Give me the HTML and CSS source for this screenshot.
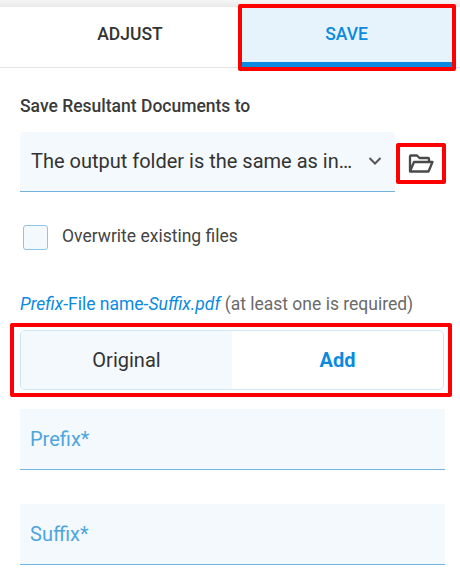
FILE: index.html
```html
<!DOCTYPE html>
<html lang="en">
<head>
    <meta charset="UTF-8">
    <title>Save</title>
    <link rel="stylesheet" href="styles.css">
</head>
<body>
    <div class="topbar"></div>
    <div class="tabs">
        <div class="tab">ADJUST</div>
        <div class="tab active">SAVE<span class="mark mark-tab"></span></div>
    </div>
    <div class="content">
        <div class="label">Save Resultant Documents to</div>
        <div class="folder-row">
            <div class="select">
                <span class="select-text">The output folder is the same as in…</span>
                <svg class="chevron" width="16" height="10" viewBox="0 0 16 10">
                    <path d="M2.500 2 L8 7.500 L13.500 2" fill="none" stroke="#555" stroke-width="2"/>
                </svg>
            </div>
            <div class="folder-btn">
                <svg width="26" height="20" viewBox="0 0 26 20">
                    <path d="M2 17.500 V2.500 Q2 1.500 3 1.500 H9 L11.500 4 H20 Q21 4 21 5 V7.500 M2 17.500 L6 8 H24.500 L20.500 17.500 Z" fill="none" stroke="#4a4a4a" stroke-width="2.300" stroke-linejoin="round"/>
                </svg>
                <span class="mark mark-folder"></span>
            </div>
        </div>
        <div class="check-row">
            <span class="checkbox"></span>
            <span class="check-label">Overwrite existing files</span>
        </div>
        <div class="hint">
            <span class="blue"><i>Prefix</i>-File name-<i>Suffix.pdf</i></span> (at least one is required)
        </div>
        <div class="segment">
            <div class="seg seg-off">Original</div>
            <div class="seg seg-on">Add</div>
            <span class="mark mark-segment"></span>
        </div>
        <div class="field">Prefix*</div>
        <div class="field field-last">Suffix*</div>
    </div>
</body>
</html>
```

FILE: styles.css
```css
* {
    box-sizing: border-box;
}

body {
    margin: 0;
    font-family: Roboto, sans-serif;
    background-color: #fff;
    color: #333;
    overflow: hidden;
}

.topbar {
    height: 7px;
    background: linear-gradient(#f6f6f6, #e9e9e9);
}

.tabs {
    display: flex;
    height: 61px;
    border-bottom: 1px solid #e4e4e4;
}

.tab {
    position: relative;
    width: 218px;
    margin-left: 21px;
    display: flex;
    align-items: center;
    justify-content: center;
    padding-bottom: 6px;
    font-size: 17.500px;
    font-weight: 500;
}

.tab.active {
    width: 211px;
    margin-left: 2px;
    color: #0a8ae0;
    background-color: #e6f3fd;
    border-bottom: 5px solid #0a8ae0;
    padding-bottom: 1px;
}

/* red annotation frames */
.mark {
    position: absolute;
    border: 4px solid #f00;
    border-radius: 2px;
    pointer-events: none;
}

.mark-tab {
    top: -3px;
    left: -3px;
    right: -4px;
    bottom: -9px;
}

.mark-folder {
    top: 0;
    left: 0;
    right: 0;
    bottom: 0;
}

.mark-segment {
    top: -8px;
    left: -11px;
    right: -9px;
    bottom: -8px;
}

.content {
    padding: 28px 14px 0 20px;
}

.label {
    font-size: 17.500px;
    font-weight: 500;
    line-height: 20px;
    color: #3a3a3a;
}

.folder-row {
    display: flex;
    align-items: center;
    margin-top: 16px;
}

.select {
    flex: none;
    width: 375px;
    height: 60px;
    display: flex;
    align-items: center;
    justify-content: space-between;
    padding: 0 12px 2px 11px;
    background-color: #f4f9fd;
    border-bottom: 1px solid #74b3de;
    border-radius: 4px 4px 0 0;
    font-size: 20px;
}

.chevron {
    flex: none;
}

.folder-btn {
    position: relative;
    flex: none;
    width: 50px;
    height: 41px;
    margin-left: 1px;
    margin-top: 3px;
    display: flex;
    align-items: center;
    justify-content: center;
}

.check-row {
    display: flex;
    align-items: center;
    margin-top: 33px;
    padding-left: 3px;
}

.checkbox {
    width: 25px;
    height: 25px;
    background-color: #f4f9fd;
    border: 1px solid #8cc4ea;
    border-radius: 3px;
}

.check-label {
    margin-left: 14px;
    margin-bottom: 3px;
    font-size: 17.500px;
    color: #444;
}

.hint {
    margin-top: 44px;
    font-size: 17.500px;
    line-height: 20px;
    color: #6a6a6a;
}

.blue {
    color: #0a8ae0;
}

.segment {
    position: relative;
    display: flex;
    width: 424px;
    height: 60px;
    margin-top: 16px;
    border: 1px solid #cfe6f7;
    border-radius: 5px;
}

.seg {
    display: flex;
    align-items: center;
    justify-content: center;
    font-size: 20px;
}

.seg-off {
    width: 211px;
    background-color: #f4f9fd;
    border-radius: 4px 0 0 4px;
}

.seg-on {
    flex: 1;
    color: #0a8ae0;
    font-weight: 700;
}

.field {
    width: 425px;
    height: 61px;
    margin-top: 19px;
    display: flex;
    align-items: center;
    padding-left: 10px;
    background-color: #f4f9fd;
    border-bottom: 1px solid #74b3de;
    font-size: 20px;
    color: #4da6dd;
}

.field-last {
    margin-top: 34px;
    border-bottom-color: #6cb8e8;
}
```
